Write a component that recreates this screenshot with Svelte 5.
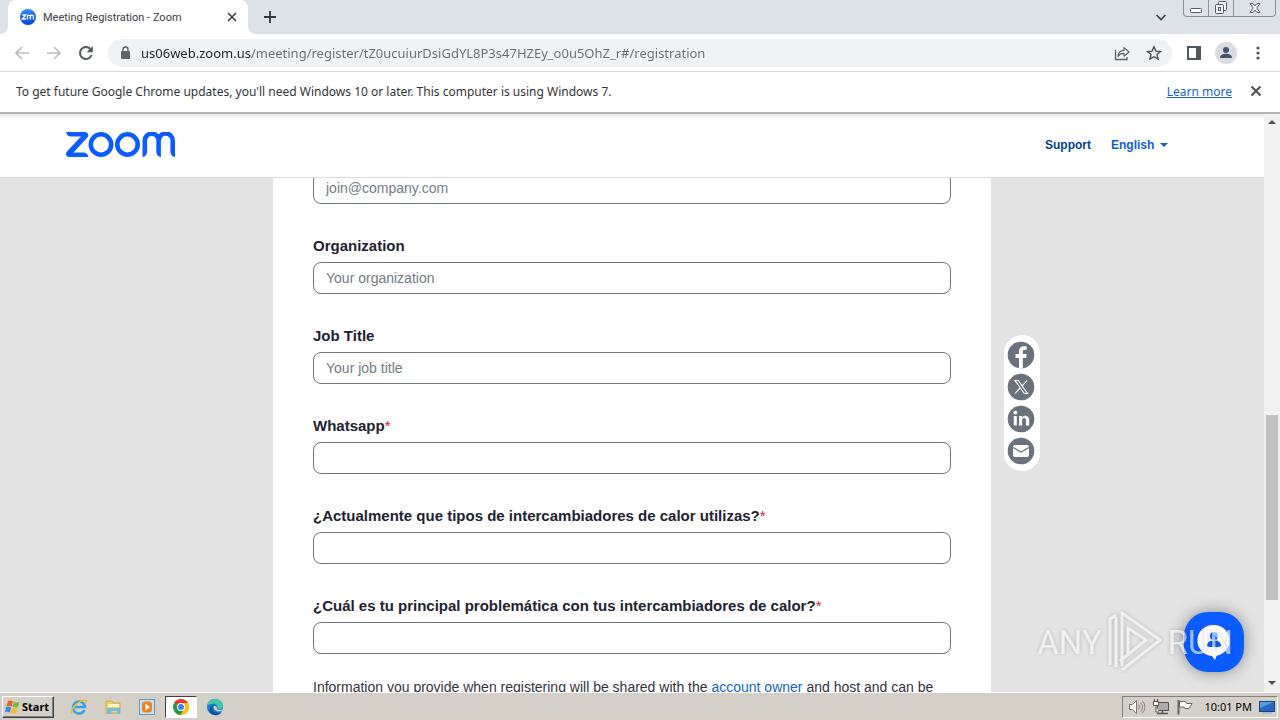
<script>
  const fields = [
    { id: 'email', label: '', placeholder: 'join@company.com', required: false },
    { id: 'organization', label: 'Organization', placeholder: 'Your organization', required: false },
    { id: 'job-title', label: 'Job Title', placeholder: 'Your job title', required: false },
    { id: 'whatsapp', label: 'Whatsapp', placeholder: '', required: true },
    { id: 'tipos', label: '¿Actualmente que tipos de intercambiadores de calor utilizas?', placeholder: '', required: true },
    { id: 'problema', label: '¿Cuál es tu principal problemática con tus intercambiadores de calor?', placeholder: '', required: true }
  ];
  const url = 'us06web.zoom.us/meeting/register/tZ0ucuiurDsiGdYL8P3s47HZEy_o0u5OhZ_r#/registration';
</script>

<div class="screen">
  <header class="tabstrip">
    <div class="tab">
      <svg class="favicon" width="16" height="16" viewBox="0 0 16 16" aria-hidden="true">
        <defs><linearGradient id="fav" x1="0" y1="0" x2="0" y2="1"><stop offset="0" stop-color="#2f8cf5" /><stop offset="1" stop-color="#0545e0" /></linearGradient></defs>
        <circle cx="8" cy="8" r="8" fill="url(#fav)" />
        <path d="M2.4 6h3.4l-3.4 4h3.6M7.4 10.4V7.6a1.5 1.5 0 0 1 3 0v2.8M10.4 7.6a1.5 1.5 0 0 1 3 0v2.8" fill="none" stroke="#fff" stroke-width="1.3" />
      </svg>
      <span class="tab-title">Meeting Registration - Zoom</span>
      <button class="plain" aria-label="Close tab">
        <svg width="16" height="16" viewBox="0 0 16 16"><path d="M4 4l8 8M12 4l-8 8" stroke="#3c4043" stroke-width="1.6" /></svg>
      </button>
    </div>
    <button class="plain new-tab" aria-label="New tab">
      <svg width="16" height="16" viewBox="0 0 16 16"><path d="M8 2v12M2 8h12" stroke="#33363a" stroke-width="1.8" /></svg>
    </button>
    <button class="plain tab-search" aria-label="Search tabs">
      <svg width="12" height="12" viewBox="0 0 12 12"><path d="M1.500 4L6 8.500 10.500 4" fill="none" stroke="#3c4043" stroke-width="1.7" /></svg>
    </button>
    <div class="window-buttons">
      <button aria-label="Minimize"><svg width="14" height="14" viewBox="0 0 14 14"><rect x="1.500" y="7.500" width="11" height="4" rx="1" fill="#fff" stroke="#555a66" /></svg></button>
      <button aria-label="Restore"><svg width="14" height="14" viewBox="0 0 14 14"><g fill="#f4f5f8" stroke="#555a66"><rect x="4.500" y=".5" width="8" height="9" rx="1" /><rect x="1.500" y="3.500" width="8" height="9" rx="1" /><rect x="4.500" y="6.500" width="2" height="3" /></g></svg></button>
      <button class="wide" aria-label="Close"><svg width="14" height="14" viewBox="0 0 14 14"><path d="M2 2.500h3l2 2.500 2-2.500h3L8.700 7l3.300 4.500H9L7 9l-2 2.500H2L5.300 7z" fill="#fff" stroke="#555a66" /></svg></button>
    </div>
  </header>

  <nav class="toolbar" aria-label="Browser">
    <button class="plain" aria-label="Back"><svg width="16" height="16" viewBox="0 0 16 16"><path d="M15 8H2M8 2L2 8l6 6" fill="none" stroke="#babcbe" stroke-width="1.7" /></svg></button>
    <button class="plain" aria-label="Forward"><svg width="16" height="16" viewBox="0 0 16 16"><path d="M1 8h13M8 2l6 6-6 6" fill="none" stroke="#babcbe" stroke-width="1.7" /></svg></button>
    <button class="plain" aria-label="Reload"><svg width="16" height="16" viewBox="0 0 16 16"><path d="M13.600 10A6 6 0 1 1 12.300 3.800" fill="none" stroke="#54585c" stroke-width="2" /><path d="M14.800 1v6.200H8.600z" fill="#54585c" /></svg></button>
    <div class="omnibox">
      <svg width="12" height="16" viewBox="0 0 12 16" aria-hidden="true"><rect x="1" y="6" width="9" height="8" rx="1" fill="#5f6368" /><path d="M3 6.500V4.500a2.500 2.500 0 0 1 5 0v2" fill="none" stroke="#5f6368" stroke-width="1.400" /></svg>
      <input class="url" aria-label="Address" value={url} />
      <button class="plain" aria-label="Share"><svg width="16" height="16" viewBox="0 0 16 16"><path d="M1.500 5v9.500H13V12" fill="none" stroke="#5f6368" stroke-width="1.300" /><path d="M4 11.500C4.300 8 6.500 5.500 10 5.400V2.600l5 4.400-5 4.200V8.400C7.500 8.300 5.500 9.300 4 11.500z" fill="none" stroke="#5f6368" stroke-width="1.200" stroke-linejoin="round" /></svg></button>
      <button class="plain" aria-label="Bookmark"><svg width="16" height="16" viewBox="0 0 16 16"><path d="M8 1.800l1.900 4.300 4.600.4-3.500 3 1.100 4.600L8 11.700l-4.100 2.400L5 9.500l-3.500-3 4.600-.4z" fill="none" stroke="#4c5054" stroke-width="1.400" /></svg></button>
    </div>
    <button class="plain" aria-label="Side panel"><svg width="16" height="16" viewBox="0 0 16 16"><rect x="2" y="2" width="12" height="12" fill="none" stroke="#54575b" stroke-width="2" /><path d="M10 2h5v12h-5z" fill="#54575b" /></svg></button>
    <button class="plain avatar" aria-label="Profile"><svg width="22" height="22" viewBox="0 0 22 22"><circle cx="11" cy="11" r="11" fill="#dadce2" /><circle cx="11" cy="8" r="3" fill="#47536c" /><path d="M5 16c0-3 3-4.300 6-4.300s6 1.300 6 4.300z" fill="#47536c" /></svg></button>
    <button class="plain" aria-label="Menu"><svg width="16" height="16" viewBox="0 0 16 16" fill="#505458"><circle cx="8" cy="3" r="1.600" /><circle cx="8" cy="8" r="1.600" /><circle cx="8" cy="13" r="1.600" /></svg></button>
  </nav>

  <div class="infobar">
    <span>To get future Google Chrome updates, you'll need Windows 10 or later. This computer is using Windows 7.</span>
    <a href="#learn">Learn more</a>
    <button class="plain" aria-label="Dismiss"><svg width="16" height="16" viewBox="0 0 16 16"><path d="M3.500 3.500l9 9M12.500 3.500l-9 9" stroke="#4a4d51" stroke-width="1.900" /></svg></button>
  </div>

  <div class="viewport">
    <div class="page">
      <header class="site-header">
        <a class="logo" href="#home" aria-label="Zoom">
          <svg width="110" height="26" viewBox="0 0 110 26" fill="none" stroke="#0b5cff" stroke-width="4.600">
            <path d="M0 0h18.500c4 0 5 3.600 2.400 6L7.500 20.400h9.500c3 0 5 1.600 5.400 4.600H3.800c-4 0-5-3.600-2.400-6L15 4.600H5.400C2.500 4.600.5 3 0 0z" fill="#0b5cff" stroke="none" />
            <circle cx="35" cy="12.500" r="10.200" />
            <circle cx="61.500" cy="12.500" r="10.200" />
            <path d="M78.800 20V8.600a6.200 6.200 0 0 1 13.800 0V20M92.600 8.600a6.200 6.200 0 0 1 14.100 0V20" />
            <path d="M76.500 19.500h4.600c0 3-1.600 5.300-4.600 5.500zM94.900 19.500h-4.600c0 3 1.600 5.300 4.600 5.500zM109 19.500h-4.600c0 3 1.600 5.300 4.600 5.500z" fill="#0b5cff" stroke="none" />
          </svg>
        </a>
        <a class="support" href="#support">Support</a>
        <label class="language">
          <select aria-label="Language"><option>English</option></select>
          <svg width="8" height="4" viewBox="0 0 8 4" aria-hidden="true"><path d="M0 0h8L4 4z" fill="#0e5fd8" /></svg>
        </label>
      </header>

      <main class="body">
        <form class="card">
          {#each fields as f}
            <div class="field">
              {#if f.label}
                <label for={f.id}>{f.label}{#if f.required}<span class="star">*</span>{/if}</label>
              {/if}
              <input id={f.id} type="text" placeholder={f.placeholder} aria-label={f.label ? undefined : 'Email'} />
            </div>
          {/each}
          <p>Information you provide when registering will be shared with the <a href="#owner">account owner</a> and host and can be</p>
        </form>
      </main>

      <aside class="share" aria-label="Share">
        <a href="#facebook" aria-label="Facebook"><svg width="28" height="28" viewBox="0 0 28 28"><circle cx="14" cy="14" r="13.300" fill="#6a737d" /><path d="M12 27.300V17H8.500v-4H12v-2.500C12 7 14 5.300 17 5.300h2.700v3.500h-1.900c-1.500 0-2 .8-2 2V13h3.900l-.6 4h-3.300v10.300z" fill="#fff" /></svg></a>
        <a href="#x" aria-label="X"><svg width="28" height="28" viewBox="0 0 28 28"><circle cx="14" cy="14" r="13.300" fill="#6a737d" /><path d="M8 7.500h3.200L20.500 20.500h-3.200zM20 7.500l-5.300 5.900M13.300 14.800L8 20.500" fill="none" stroke="#fff" stroke-width="1.100" /></svg></a>
        <a href="#linkedin" aria-label="LinkedIn"><svg width="28" height="28" viewBox="0 0 28 28"><circle cx="14" cy="14" r="13.300" fill="#6a737d" /><g fill="#fff"><circle cx="8.300" cy="7.600" r="1.900" /><path d="M6.800 11h3v9.500h-3zM12 11h3v1.400c2-2.700 7.200-2 7.200 2.400v5.700H19v-5.200c0-3-3.900-2.800-3.900 0v5.200H12z" /></g></svg></a>
        <a href="#email" aria-label="Email"><svg width="28" height="28" viewBox="0 0 28 28"><circle cx="14" cy="14" r="13.300" fill="#6a737d" /><rect x="6" y="8" width="16" height="12" rx="2" fill="#fff" /><path d="M6 10.500l8 4.500 8-4.500" fill="none" stroke="#6a737d" stroke-width="1.200" /></svg></a>
      </aside>

      <button class="chat" aria-label="Chat">
        <svg width="36" height="40" viewBox="0 0 36 40"><path d="M18 3a15.500 15.500 0 0 0-2 31l3 4 1.500-4.200A15.500 15.500 0 0 0 18 3z" fill="#fff" /><circle cx="18" cy="14" r="4" fill="#0b5cff" /><path d="M11 24c0-4 3-5.500 7-5.500s7 1.500 7 5.500c0 1.500-14 1.500-14 0z" fill="#0b5cff" /></svg>
      </button>

      <div class="watermark">
        <span>ANY</span>
        <svg width="58" height="64" viewBox="0 0 58 64" fill="none" stroke="#fafafa" stroke-width="3" stroke-linejoin="round" aria-hidden="true">
          <path d="M10 57V7M16 56V3l38 27-38 30M22 43V18l18 12-26 21M4 55V9l6-4" />
        </svg>
        <span>RUN</span>
      </div>
    </div>

    <div class="scrollbar" aria-hidden="true">
      <svg width="16" height="17" viewBox="0 0 16 17"><path d="M4 10h8L8 6z" fill="#505050" /></svg>
      <div class="before"></div>
      <div class="thumb"></div>
      <div class="after"></div>
      <svg width="16" height="17" viewBox="0 0 16 17"><path d="M4 6h8l-4 4z" fill="#505050" /></svg>
    </div>
  </div>

  <footer class="taskbar">
    <button class="start">
      <svg width="17" height="16" viewBox="0 0 17 16" aria-hidden="true"><path d="M4 2c2-1 3.500-.6 5 .3L7.500 7.500C6 6.600 4.500 6.400 2.500 7z" fill="#e8602c" /><path d="M9.800 2.700c2 1 3.700.8 5.700 0L14 8c-2 .8-3.700.8-5.600-.2z" fill="#7db83a" /><path d="M2.200 8c2-.7 3.500-.4 5 .5L5.700 13.600c-1.500-1-3-1-5-.4z" fill="#3a8be0" /><path d="M8 8.900c2 1 3.700.9 5.700.1l-1.500 5c-2 .8-3.700.8-5.700-.2z" fill="#f8bc28" /></svg>
      Start
    </button>
    <div class="quick">
      <button class="plain" aria-label="Internet Explorer"><svg width="18" height="18" viewBox="0 0 18 18"><path d="M14.500 12A6 6 0 1 1 15 9H4.500" fill="none" stroke="#35a4e6" stroke-width="2.600" /><path d="M2 15.500C-1 12 10 1 16 2.500c1 .5.500 2 0 3" fill="none" stroke="#e9bb35" stroke-width="1.500" /></svg></button>
      <button class="plain" aria-label="Explorer"><svg width="18" height="18" viewBox="0 0 18 18"><path d="M2 3h6l1 2h7v10H2z" fill="#f0cf69" stroke="#c9a23b" stroke-width=".8" /><path d="M4 6h11v3H4z" fill="#fff6cf" /><path d="M3 10h13v6h-3v-3H7v3H3z" fill="#75b9e0" /></svg></button>
      <button class="plain" aria-label="Media Player"><svg width="18" height="18" viewBox="0 0 18 18"><rect x="1.500" y="1.500" width="15" height="15" fill="#c8e2f4" stroke="#6695bc" /><rect x="4" y="3.500" width="10" height="11" rx="3" fill="#f18118" /><path d="M7.500 5.500L12 9l-4.500 3.500z" fill="#fff" /></svg></button>
      <button class="plain active" aria-label="Chrome"><svg width="18" height="18" viewBox="0 0 18 18"><circle cx="9" cy="9" r="8" fill="#fbc116" /><path d="M9 9L2.100 5A8 8 0 0 1 15.900 5z" fill="#e33b2e" /><path d="M2.100 5A8 8 0 0 0 8.500 17l4-6.500L9 9z" fill="#229a4c" /><path d="M9 5h7a8 8 0 0 1-7.500 12l4-6z" fill="#fbc116" /><circle cx="9" cy="9" r="4" fill="#fff" /><circle cx="9" cy="9" r="3" fill="#3d7ff0" /></svg></button>
      <button class="plain" aria-label="Edge"><svg width="18" height="18" viewBox="0 0 18 18"><circle cx="9" cy="9" r="8" fill="#1579c9" /><path d="M1.200 8C2 3 6 1 9 1c5 0 8 3.500 8 6.500 0 3-3 4-5.500 3C13 6 6 3.500 1.200 8z" fill="#42c8a4" /><path d="M7 7.500c-2 3 0 7.500 5 7.500 1.500 0 3-.5 4-1.500C14 18 6 18.500 4 14c-1-3 .5-5.500 3-6.500z" fill="#0c509c" /><path d="M8 8c2-.5 3.500 1 2.800 2.800 1 1.300 4 1.400 6 .2-1 2.500-4 3-6 2C8 12 7 10 8 8z" fill="#d4d0c8" /></svg></button>
    </div>
    <div class="tray">
      <svg width="18" height="16" viewBox="0 0 18 16" aria-hidden="true"><path d="M1.500 5.500h3l4-4v13l-4-4h-3z" fill="#fff" stroke="#77756f" /><path d="M10.500 5.500q2 2.500 0 5M12.500 3.500q4 4.500 0 9M14.500 2q5 6 0 12" fill="none" stroke="#8a8882" /></svg>
      <svg width="18" height="16" viewBox="0 0 18 16" aria-hidden="true"><path d="M5.500 3.500h11v8h-11z" fill="#aaa" stroke="#55534e" /><path d="M5 14.500h11M10.500 12v2" stroke="#55534e" stroke-width="1.500" /><path d="M1.500 2.500h5v4h-5zM2.500 0v2M5.500 0v2M4 7v6h3" fill="#fff" stroke="#55534e" /></svg>
      <svg width="18" height="16" viewBox="0 0 18 16" aria-hidden="true"><path d="M2.500 1v14.500" stroke="#66645f" stroke-width="2" /><path d="M3.500 2.500h6l1 2h5.500l-3 5H9l-1-1.500H3.500z" fill="#fff" stroke="#66645f" /></svg>
      <time>10:01 PM</time>
      <svg width="18" height="16" viewBox="0 0 18 16" aria-hidden="true"><rect x="1.500" y="2.500" width="15" height="10" fill="#2868bd" stroke="#194282" /><path d="M2 3h14L2 9z" fill="#5c9be3" /><path d="M4 14h10" stroke="#7ba4d8" /></svg>
    </div>
  </footer>
</div>

<style>
  :global(body) { margin: 0; overflow: hidden; }
  * { box-sizing: border-box; }
  .screen { height: 100vh; display: flex; flex-direction: column; font-family: "Noto Sans", "Open Sans", sans-serif; background: #fff; overflow: hidden; }
  svg { display: block; flex: none; }
  button { font: inherit; }
  .plain { border: 0; padding: 0; background: none; display: grid; place-items: center; }

  .tabstrip { flex: none; height: 34px; display: flex; align-items: flex-start; background: #dde1e8; padding: 0 4px 0 8px; }
  .tab { position: relative; width: 240px; height: 34px; padding: 0 8px 0 12px; display: flex; align-items: center; gap: 7px; background: #fff; border-radius: 8px 8px 0 0; }
  .tab::before, .tab::after { content: ""; position: absolute; bottom: 0; width: 8px; height: 8px; }
  .tab::before { left: -8px; background: radial-gradient(circle at 0 0, transparent 8px, #fff 8px); }
  .tab::after { right: -8px; background: radial-gradient(circle at 100% 0, transparent 8px, #fff 8px); }
  .tab-title { flex: 1; font-size: 11px; font-family: Roboto, sans-serif; color: #3c4043; white-space: nowrap; }
  .new-tab { height: 34px; margin-left: 14px; }
  .tab-search { height: 34px; margin-left: auto; margin-right: 16px; }
  .window-buttons { display: flex; height: 17px; border: 1px solid #8b909c; border-top: 0; border-radius: 0 0 4px 4px; }
  .window-buttons button { width: 25px; border: 0; border-right: 1px solid #8b909c; padding: 0; background: none; display: grid; place-items: center; }
  .window-buttons .wide { width: 41px; border-right: 0; }

  .toolbar { flex: none; height: 38px; display: flex; align-items: center; gap: 16px; padding: 0 14px; border-bottom: 1px solid #d8dadd; }
  .avatar { margin: 0 -3px; }
  .omnibox { flex: 1; height: 28px; margin: 0 -2px 0 -2px; padding: 0 10px 0 12px; border-radius: 14px; background: #f0f3f6; display: flex; align-items: center; gap: 16px; }
  .omnibox .url { flex: 1; min-width: 0; margin-left: -7px; border: 0; padding: 0; outline: 0; font: 13px "Noto Sans", sans-serif; color: transparent; background: linear-gradient(90deg, #202124 111px, #686c71 111px); -webkit-background-clip: text; background-clip: text; }

  .infobar { flex: none; height: 42px; padding: 0 16px 2px; display: flex; align-items: center; font-size: 12px; color: #333639; border-bottom: 2px solid #b4b4b4; }
  .infobar a { margin-left: auto; margin-right: 16px; color: #1a66c8; text-decoration: underline; }

  .viewport { flex: 1; min-height: 0; display: flex; }
  .page { position: relative; flex: 1; min-width: 0; display: flex; flex-direction: column; overflow: hidden; font-family: "Liberation Sans", Arial, sans-serif; background: #e4e4e4; }
  .site-header { flex: none; height: 64px; padding: 0 96px 2px 66px; display: flex; align-items: center; background: linear-gradient(#e4e4e4, #fff 4px); border-bottom: 1px solid #dcdcdc; font-size: 12px; font-weight: bold; }
  .support { margin-left: auto; color: #00438f; text-decoration: none; }
  .language { margin-left: 20px; display: flex; align-items: center; gap: 5px; }
  .language select { appearance: none; border: 0; padding: 0; background: none; font: inherit; color: #0e5fd8; }
  .body { flex: 1; min-height: 0; overflow: hidden; display: flex; justify-content: center; align-items: flex-start; }
  .card { width: 718px; margin-top: -6px; padding: 0 40px 40px; background: #fff; display: flex; flex-direction: column; gap: 32px; }
  .field { display: flex; flex-direction: column; gap: 6px; }
  .field label { font-size: 15px; line-height: 20px; font-weight: bold; color: #222230; }
  .star { color: #d8203a; font-weight: normal; }
  .field input { height: 32px; padding: 0 12px; border: 1px solid #6e7680; border-radius: 8px; background: #fff; font: 14px "Liberation Sans", Arial, sans-serif; color: #222230; }
  .field input::placeholder { color: #747b84; opacity: 1; }
  .card p { margin: -9px 0 0; font-size: 14px; line-height: 20px; color: #33333d; }
  .card p a { color: #1468bd; text-decoration: none; }

  .share { position: absolute; top: 221px; left: calc(50% + 372px); width: 36px; padding: 6px 0; display: flex; flex-direction: column; align-items: center; gap: 4px; border-radius: 18px; background: #fff; }
  .share a { margin-right: 2px; }
  .chat { position: absolute; right: 20px; bottom: 20px; width: 60px; height: 60px; border: 0; border-radius: 24px; padding: 0; background: #0b5cff; box-shadow: 0 0 16px #0006; display: grid; place-items: center; }
  .watermark { position: absolute; right: 31px; bottom: 18px; display: flex; align-items: center; gap: 4px; opacity: 0.6; color: #fafafa; font: 33px Roboto, sans-serif; pointer-events: none; filter: drop-shadow(0 0 2px #0005); }

  .scrollbar { flex: none; width: 16px; display: flex; flex-direction: column; background: #f1f1f1; }
  .before { flex: 284; }
  .thumb { flex: 185; margin: 0 2px; background: #c1c1c1; }
  .after { flex: 75; }

  .taskbar { flex: none; height: 28px; padding: 2px; display: flex; align-items: center; background: #d4d0c8; border-top: 1px solid #fff; font-size: 11px; color: #000; }
  .start { height: 22px; width: 52px; padding: 0 3px 0 1px; display: flex; align-items: center; gap: 1px; border: 1px solid; border-color: #fff #404040 #404040 #fff; box-shadow: inset -1px -1px #808080; background: #d4d0c8; font-weight: bold; }
  .quick { margin-left: 9px; display: flex; gap: 2px; }
  .quick button { width: 32px; height: 22px; }
  .quick .active { background: #fff; border: 1px solid; border-color: #404040 #fff #fff #404040; }
  .tray { margin-left: auto; height: 22px; padding: 0 1px 0 5px; display: flex; align-items: center; gap: 6px; border: 1px solid; border-color: #808080 #fff #fff #808080; }
  .tray time { margin-left: 4px; white-space: nowrap; }
</style>
